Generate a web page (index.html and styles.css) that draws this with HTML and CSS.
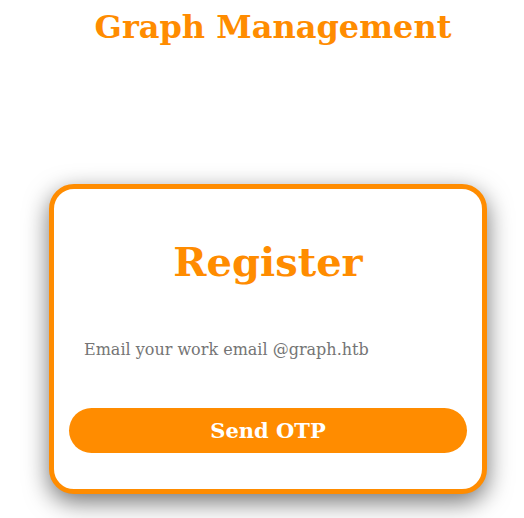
FILE: index.html
```html
<!DOCTYPE html>
<html>
<head>
<meta charset="utf-8">
<title>Graph Management</title>
<link rel="stylesheet" href="styles.css">
</head>
<body>
<h1 class="title">Graph Management</h1>
<div class="card">
  <h2 class="card-title">Register</h2>
  <input class="email" type="text" placeholder="Email your work email @graph.htb">
  <button class="send">Send OTP</button>
</div>
</body>
</html>
```

FILE: styles.css
```css
html, body {
  margin: 0;
  padding: 0;
  background: #ffffff;
  font-family: "DejaVu Serif", serif;
}

body {
  padding-bottom: 40px;
}

.title {
  margin: 8px 0 0 0;
  padding-left: 22px;
  text-align: center;
  font-size: 32px;
  font-weight: bold;
  color: #ff8c00;
}

.card {
  box-sizing: border-box;
  width: 438px;
  margin: 138px 0 0 49px;
  border: 5px solid #ff8c00;
  border-radius: 25px;
  padding: 49px 15px 36px 15px;
  background: #ffffff;
  box-shadow: 0 8px 24px rgba(0, 0, 0, 0.55);
  display: flex;
  flex-direction: column;
}

.card-title {
  margin: 0;
  text-align: center;
  font-size: 40px;
  font-weight: bold;
  color: #ff8c00;
}

.email {
  box-sizing: border-box;
  display: block;
  width: 100%;
  margin: 40px 0 0 0;
  padding: 15px;
  border: none;
  outline: none;
  background: transparent;
  font-family: "DejaVu Serif", serif;
  font-size: 16px;
  color: #333;
}

.email::placeholder {
  color: #757575;
}

.send {
  display: block;
  width: 100%;
  height: 45px;
  margin-top: 34px;
  border: none;
  border-radius: 25px;
  background: #ff8c00;
  color: #ffffff;
  font-family: "DejaVu Serif", serif;
  font-size: 21px;
  font-weight: bold;
  cursor: pointer;
}
```
